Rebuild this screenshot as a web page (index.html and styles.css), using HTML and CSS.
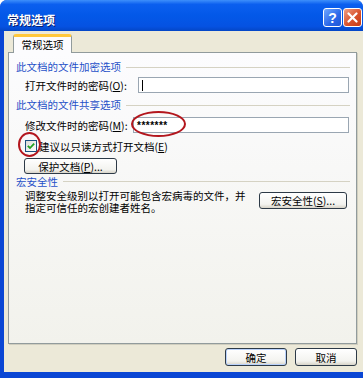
FILE: index.html
```html
<!DOCTYPE html>
<html lang="zh-CN">
<head>
    <meta charset="UTF-8">
    <title>常规选项</title>
    <link rel="stylesheet" href="styles.css">
</head>
<body>
    <div class="window">
        <div class="titlebar">
            <span class="title">常规选项</span>
            <div class="tb-btns">
                <span class="tb-btn help">?</span>
                <span class="tb-btn close">
                    <svg width="11" height="11" viewBox="0 0 11 11"><path d="M1.5 1.5 L9.5 9.5 M9.5 1.5 L1.5 9.5" stroke="#fff" stroke-width="2.2" stroke-linecap="round"/></svg>
                </span>
            </div>
        </div>
        <div class="client">
            <div class="tabs">
                <div class="tab">常规选项</div>
            </div>
            <div class="panel">
                <div class="group-head">此文档的文件加密选项</div>
                <div class="row row-open">
                    <label class="lbl lbl-open">打开文件时的密码(<u>O</u>):</label>
                    <div class="input"><span class="caret"></span></div>
                </div>

                <div class="group-head head-share">此文档的文件共享选项</div>
                <div class="row row-modify">
                    <label class="lbl lbl-modify">修改文件时的密码(<u>M</u>):</label>
                    <div class="input"><span class="stars">*******</span></div>
                </div>

                <div class="row row-check">
                    <span class="checkbox">
                        <svg width="8" height="8" viewBox="0 0 8 8"><path d="M0.8 3.8 L3 6 L7.2 1.6" fill="none" stroke="#21A121" stroke-width="1.8"/></svg>
                    </span>
                    <span>建议以只读方式打开文档(<u>E</u>)</span>
                </div>

                <div class="row row-protect">
                    <button class="btn btn-protect">保护文档(<u>P</u>)...</button>
                </div>

                <div class="group-head head-macro">宏安全性</div>
                <div class="macro-row">
                    <p class="macro-text">调整安全级别以打开可能包含宏病毒的文件，并指定可信任的宏创建者姓名。</p>
                    <button class="btn btn-macro">宏安全性(<u>S</u>)...</button>
                </div>
            </div>
            <div class="footer">
                <button class="btn btn-ok">确定</button>
                <button class="btn">取消</button>
            </div>
        </div>
    </div>

    <!-- red marks drawn over the dialog -->
    <span class="mark mark-password"></span>
    <span class="mark mark-check"></span>
</body>
</html>
```

FILE: styles.css
```css
body {
    margin: 0;
    background: #fff;
    font-family: "Noto Sans CJK SC", "Liberation Sans", sans-serif;
    font-size: 10.5px;
    color: #000;
    position: relative;
}
.window {
    width: 363px;
    height: 378px;
    display: flex;
    flex-direction: column;
    background: #0A46D4;
    border-radius: 7px 7px 0 0;
    overflow: hidden;
}
.titlebar {
    height: 31px;
    flex: none;
    box-sizing: border-box;
    display: flex;
    align-items: center;
    padding: 4px 1px 0 7px;
    background: linear-gradient(#3D8FFB, #0B5FEF 14%, #0358E8 50%, #0552E2 85%, #0446C6);
}
.title {
    flex: 1;
    color: #fff;
    font-weight: bold;
    font-size: 12px;
    text-shadow: 1px 1px #0A1E6E;
    padding-top: 3px;
}
.tb-btns {
    display: flex;
    gap: 1px;
}
.tb-btn {
    width: 19px;
    height: 19px;
    box-sizing: border-box;
    border: 1px solid #fff;
    border-radius: 3px;
    display: flex;
    align-items: center;
    justify-content: center;
    color: #fff;
    font-family: "Liberation Sans", sans-serif;
    font-weight: bold;
    font-size: 14px;
}
.help {
    background: linear-gradient(135deg, #6FA8FF, #2A66E8 60%, #1F55D6);
}
.close {
    background: linear-gradient(135deg, #F0A085, #D8512C 55%, #C53A14);
}
.client {
    flex: 1;
    margin: 0 0 6px 4px;
    padding: 3px 6px 0 4px;
    background: #ECE9D8;
    display: flex;
    flex-direction: column;
}
.tabs {
    display: flex;
    height: 19px;
    padding-left: 5px;
    position: relative;
    z-index: 1;
}
.tab {
    width: 59px;
    height: 19px;
    box-sizing: border-box;
    border: 1px solid #919B9C;
    border-top: 3px solid #FFC83C;
    border-bottom: none;
    border-radius: 3px 3px 0 0;
    background: #FCFCFE;
    text-align: center;
    font-size: 10.5px;
    line-height: 15px;
}
.panel {
    height: 292px;
    margin-top: -1px;
    box-sizing: border-box;
    border: 1px solid #919B9C;
    background: linear-gradient(#FCFCFE, #F2F2EC);
    box-shadow: 1px 1px 0 #D0CEBF;
    padding: 7px 7px 0 7px;
}
.group-head {
    display: flex;
    align-items: center;
    gap: 5px;
    line-height: 14px;
    color: #1F50C8;
}
.group-head::after {
    content: "";
    flex: 1;
    height: 1px;
    margin-right: -1px;
    background: #D5D2C3;
}
.head-share {
    margin-top: 5px;
}
.head-macro {
    margin-top: 1px;
    line-height: 13px;
}
.row {
    display: flex;
    align-items: center;
    height: 16px;
    padding-left: 9px;
}
.row-open {
    margin-top: 3px;
}
.row-modify {
    margin-top: 5px;
}
.row-check {
    height: 12px;
    margin-top: 7px;
    gap: 2px;
}
.row-protect {
    margin-top: 6px;
    padding-left: 8px;
}
.lbl-open {
    width: 113px;
    flex: none;
}
.lbl-modify {
    width: 108px;
    flex: none;
}
.input {
    flex: 1;
    height: 16px;
    box-sizing: border-box;
    border: 1px solid #9AA6B2;
    background: #fff;
    display: flex;
    align-items: center;
    padding-left: 3px;
}
.caret {
    width: 1px;
    height: 11px;
    background: #000;
}
.stars {
    font-family: "Liberation Sans", sans-serif;
    font-weight: bold;
    font-size: 10px;
    letter-spacing: 0.5px;
}
.checkbox {
    width: 12px;
    height: 12px;
    box-sizing: border-box;
    border: 1px solid #1C5180;
    background: linear-gradient(135deg, #DCDCD6, #FFFFFF);
    display: flex;
    align-items: center;
    justify-content: center;
}
.btn {
    height: 16px;
    box-sizing: border-box;
    border: 1px solid #2D3A47;
    border-radius: 3px;
    background: linear-gradient(#FFFFFF, #F3F3EF 75%, #D8D4C8);
    font: inherit;
    color: #000;
    padding: 0;
    display: flex;
    align-items: center;
    justify-content: center;
}
.btn-protect {
    width: 93px;
}
.macro-row {
    display: flex;
    align-items: flex-start;
    margin-top: 2px;
    padding-left: 9px;
}
.macro-text {
    width: 222px;
    margin: 0;
    line-height: 12px;
}
.btn-macro {
    width: 88px;
    height: 17px;
    margin: 2px 2px 0 auto;
}
.footer {
    display: flex;
    justify-content: flex-end;
    gap: 8px;
    margin-top: 4px;
}
.footer .btn {
    width: 62px;
    height: 18px;
}
.btn-ok {
    box-shadow: inset 0 0 0 1px #B9D1FA;
}
.mark {
    position: absolute;
    box-sizing: border-box;
    border: 2px solid #B3161D;
    border-radius: 50%;
}
.mark-password {
    left: 131px;
    top: 111px;
    width: 55px;
    height: 26px;
}
.mark-check {
    left: 18px;
    top: 132px;
    width: 23px;
    height: 25px;
}
```
